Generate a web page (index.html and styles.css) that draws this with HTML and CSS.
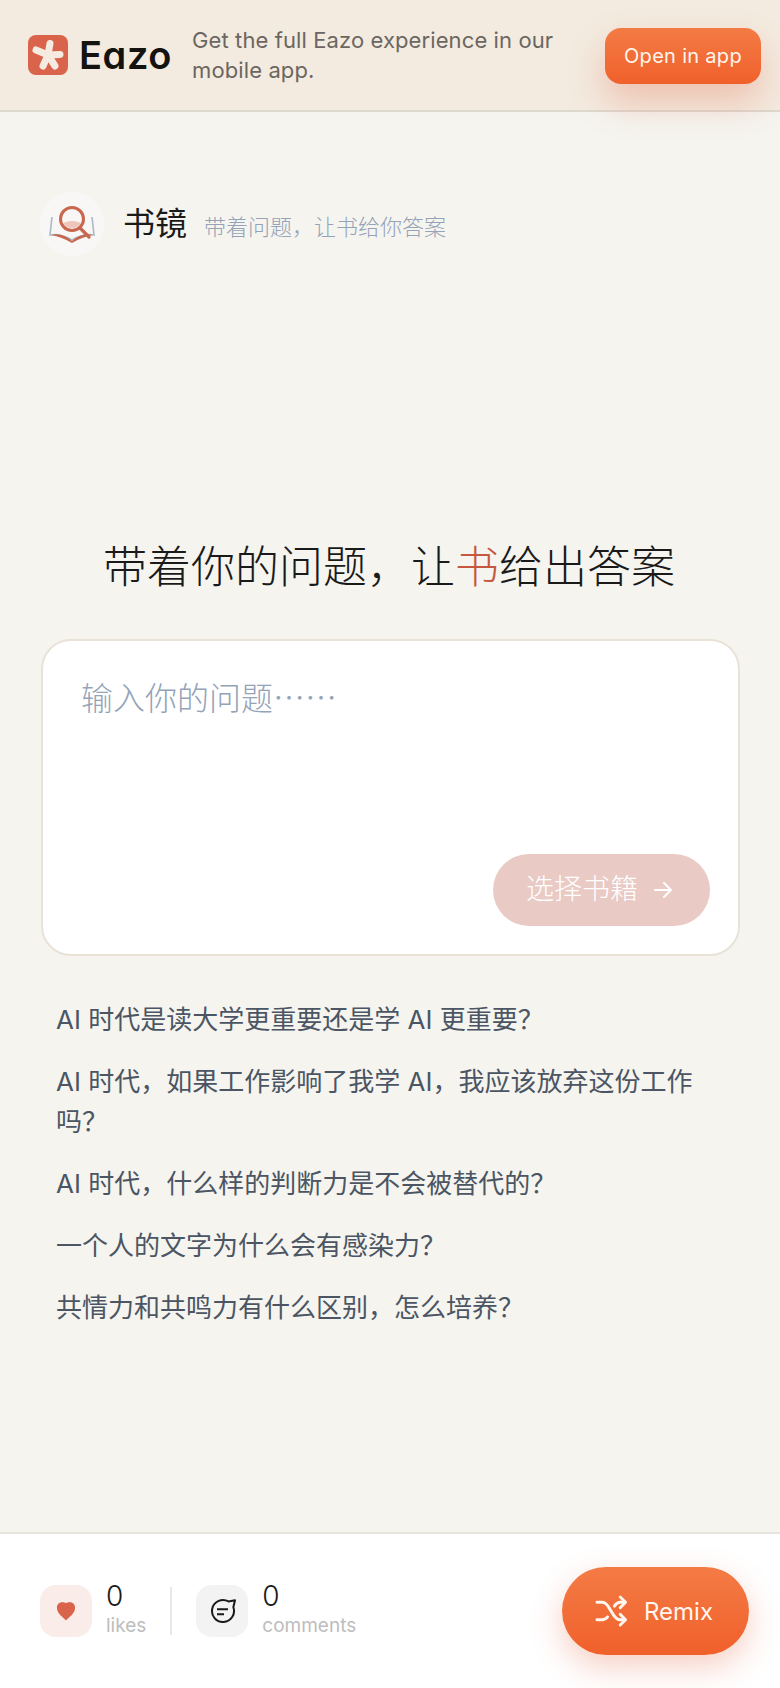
FILE: index.html
```html
<!DOCTYPE html>
<html lang="zh-CN">
<head>
<meta charset="UTF-8">
<meta name="viewport" content="width=device-width, initial-scale=1.0">
<title>书镜</title>
<link rel="stylesheet" href="styles.css">
</head>
<body>
<div class="page">
  <header class="banner">
    <div class="logo">
      <svg class="logo-mark" width="40" height="40" viewBox="0 0 40 40">
        <rect width="40" height="40" rx="8" fill="#d9634b"/>
        <g stroke="#f6ebe0" stroke-width="7" stroke-linecap="round">
          <line x1="20" y1="20" x2="22" y2="8.500"/>
          <line x1="20" y1="20" x2="32" y2="19.500"/>
          <line x1="20" y1="20" x2="27" y2="31"/>
          <line x1="20" y1="20" x2="15" y2="31"/>
          <line x1="20" y1="20" x2="8" y2="15"/>
        </g>
      </svg>
      <span class="logo-text">Eazo</span>
    </div>
    <p class="banner-text">Get the full Eazo experience in our mobile app.</p>
    <button class="open-btn">Open in app</button>
  </header>

  <section class="app-head">
    <div class="app-icon">
      <svg width="48" height="40" viewBox="0 0 48 40" fill="none">
        <path d="M4 13 L2 31 Q12 29 24 36 Q36 29 46 31 L44 13" stroke="#a9bac6" stroke-width="1.6"/>
        <path d="M3 31 Q14 28 24 37 Q34 28 45 31 Q34 33 24 39 Q14 33 3 31Z" fill="#c8664e"/>
        <path d="M15 19 Q24 15 33 19 A10.5 10.5 0 0 1 15 19Z" fill="#efc4bb"/>
        <circle cx="24" cy="15" r="11.5" stroke="#c8664e" stroke-width="3"/>
        <line x1="32" y1="24" x2="41" y2="33" stroke="#c8664e" stroke-width="3.2" stroke-linecap="round"/>
      </svg>
    </div>
    <span class="app-name">书镜</span>
    <span class="app-desc">带着问题，让书给你答案</span>
  </section>

  <main class="main">
    <h1 class="headline">带着你的问题，让<span class="accent">书</span>给出答案</h1>
    <div class="ask-card">
      <div class="placeholder">输入你的问题……</div>
      <button class="pick-btn"><span class="pick-label">选择书籍</span>
        <svg width="22" height="22" viewBox="0 0 22 22" fill="none" stroke="#fff" stroke-width="2" stroke-linecap="round" stroke-linejoin="round"><path d="M3 11h16M12 4l7 7-7 7"/></svg>
      </button>
    </div>
    <ul class="questions">
      <li>AI 时代是读大学更重要还是学 AI 更重要？</li>
      <li>AI 时代，如果工作影响了我学 AI，我应该放弃这份工作吗？</li>
      <li>AI 时代，什么样的判断力是不会被替代的？</li>
      <li>一个人的文字为什么会有感染力？</li>
      <li>共情力和共鸣力有什么区别，怎么培养？</li>
    </ul>
  </main>

  <footer class="footer">
    <div class="stat">
      <div class="stat-icon stat-like">
        <svg width="20" height="20" viewBox="0 0 22 22"><path d="M11 21.500 C8 18 1 14 1 7.500 C1 3.500 4 1.500 7 1.500 C8.800 1.500 10 1.900 11 2.500 C12 1.900 13.200 1.500 15 1.500 C18 1.500 21 3.500 21 7.500 C21 14 14 18 11 21.500Z" fill="#d9634b"/></svg>
      </div>
      <div class="stat-text"><span class="stat-num">0</span><span class="stat-label">likes</span></div>
    </div>
    <div class="stat-line"></div>
    <div class="stat">
      <div class="stat-icon stat-comment">
        <svg width="28" height="28" viewBox="0 0 28 28" fill="none" stroke="#1a1a1a" stroke-width="2" stroke-linejoin="round"><path d="M20.500 4.470 L27 3.200 L25.340 10.240 A11 11 0 1 1 20.500 4.470Z"/><path d="M9 12.300h11M9 17.300h7"/></svg>
      </div>
      <div class="stat-text"><span class="stat-num">0</span><span class="stat-label">comments</span></div>
    </div>
    <button class="remix-btn">
      <svg width="33" height="34" viewBox="0 0 34 34" fill="none" stroke="#fff6ee" stroke-width="3" stroke-linecap="round" stroke-linejoin="round"><path d="M2 8h5c3 0 5 1.500 7 5l5 8c2 3 4 5 7 5h5M2 26h5c2.500 0 4.500-1 6-3M20 12c1.700-2.700 3.500-4 6-4h5M26 2.500l5.500 5.500-5.500 5.500M26 20.500l5.500 5.500-5.500 5.500"/></svg>
      Remix
    </button>
  </footer>
</div>
</body>
</html>
```

FILE: styles.css
```css
* {
    box-sizing: border-box;
}
body {
    margin: 0;
    background-color: #f5f4ef;
    font-family: Inter, "Noto Sans CJK SC", sans-serif;
}
.page {
    display: flex;
    flex-direction: column;
    min-height: 100vh;
}
button {
    border: none;
    font-family: inherit;
}

/* top banner */
.banner {
    display: flex;
    align-items: center;
    height: 112px;
    padding: 0 19px 0 28px;
    background-color: #f3ebe0;
    border-bottom: 2px solid #ddd8ce;
}
.logo {
    display: flex;
    align-items: center;
    gap: 11px;
    margin-right: 20px;
}
.logo-mark {
    flex-shrink: 0;
}
.logo-text {
    font-size: 38px;
    font-weight: 600;
    font-feature-settings: "cv11";
    letter-spacing: 0.6px;
    color: #14130f;
}
.banner-text {
    flex: 1;
    margin: 0;
    font-size: 22px;
    line-height: 30px;
    letter-spacing: 0.1px;
    color: #6b6660;
}
.open-btn {
    width: 156px;
    height: 56px;
    margin-top: 2px;
    border-radius: 16px;
    background: linear-gradient(180deg, #f47b45, #f0602b);
    color: #fff6ee;
    font-size: 20px;
    letter-spacing: 0.3px;
    box-shadow: 0 18px 36px rgba(226, 96, 60, 0.3);
}

/* app name row */
.app-head {
    display: flex;
    align-items: center;
    margin: 80px 0 0 40px;
}
.app-icon {
    display: flex;
    align-items: center;
    justify-content: center;
    width: 64px;
    height: 64px;
    border-radius: 50%;
    background-color: #f8f7f5;
    margin-right: 19px;
}
.app-name {
    font-size: 32px;
    font-weight: 400;
    color: #1a1a1a;
    margin-right: 17px;
    padding-bottom: 6px;
}
.app-desc {
    font-size: 22px;
    font-weight: 300;
    color: #94a3b8;
    padding-top: 1px;
}

/* ask area */
.main {
    padding: 0 40px 0 41px;
}
.headline {
    margin: 279px 0 0;
    padding-right: 3px;
    text-align: center;
    font-size: 44px;
    font-weight: 300;
    line-height: 64px;
    color: #1a1a1a;
}
.accent {
    color: #c4593f;
}
.ask-card {
    display: flex;
    flex-direction: column;
    justify-content: space-between;
    height: 317px;
    margin-top: 40px;
    padding: 31px 28px 28px 38px;
    background-color: #fff;
    border: 2px solid #e9e2d7;
    border-radius: 30px;
}
.placeholder {
    font-family: "Noto Sans CJK SC", sans-serif;
    font-size: 32px;
    font-weight: 300;
    line-height: 48px;
    color: #94a3b8;
}
.pick-btn {
    display: flex;
    align-items: center;
    gap: 14px;
    align-self: flex-end;
    height: 72px;
    padding: 0 36px 0 33px;
    border-radius: 36px;
    background-color: #e9cac5;
    color: #fff;
    font-size: 28px;
    font-weight: 300;
}
.pick-label {
    padding-bottom: 6px;
}
.questions {
    list-style: none;
    margin: 44px 0 0;
    padding: 0 15px;
    font-size: 26px;
    font-weight: 400;
    line-height: 40px;
    color: #4b5563;
}
.questions li {
    margin-bottom: 22px;
}

/* bottom bar */
.footer {
    display: flex;
    align-items: center;
    height: 156px;
    margin-top: auto;
    padding: 0 31px 0 40px;
    background-color: #fff;
    border-top: 2px solid #e6e4df;
}
.stat {
    display: flex;
    align-items: center;
    gap: 14px;
}
.stat-icon {
    display: flex;
    align-items: center;
    justify-content: center;
    width: 52px;
    height: 52px;
    border-radius: 16px;
}
.stat-like {
    background-color: #f9ece9;
}
.stat-comment {
    background-color: #f3f3f3;
}
.stat-text {
    display: flex;
    flex-direction: column;
    padding-bottom: 4px;
}
.stat-num {
    font-size: 28px;
    line-height: 34px;
    font-weight: 300;
    color: #1a1a1a;
}
.stat-label {
    font-size: 19px;
    line-height: 26px;
    color: #bdbdbd;
}
.stat-line {
    width: 2px;
    height: 48px;
    margin: 0 24px;
    background-color: #e8e8e8;
}
.remix-btn {
    display: flex;
    align-items: center;
    gap: 16px;
    margin-left: auto;
    height: 88px;
    padding: 0 36px 0 33px;
    border-radius: 44px;
    background: linear-gradient(180deg, #f47b45, #f0602b);
    color: #fff6ee;
    font-size: 24px;
    box-shadow: 0 12px 32px rgba(226, 96, 60, 0.3);
}
```
